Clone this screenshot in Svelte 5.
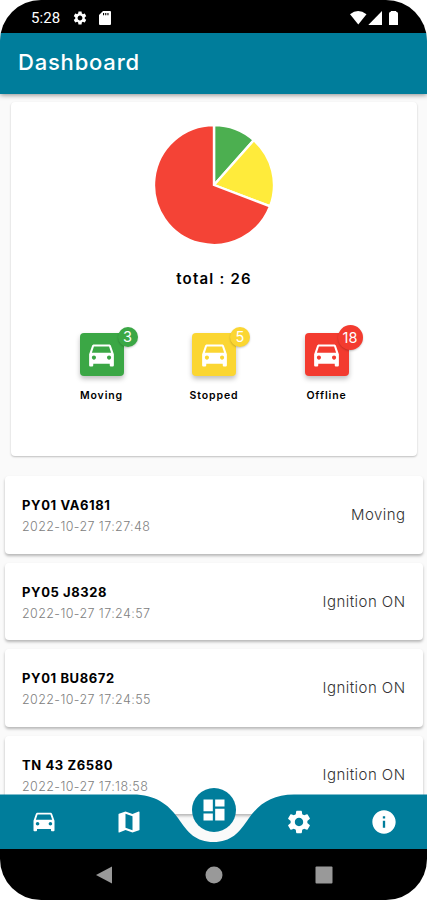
<script lang="ts">
  type Status = { label: string; count: number; color: string; pie: string };

  const statuses: Status[] = [
    { label: 'Moving', count: 3, color: '#3ba745', pie: '#4caf50' },
    { label: 'Stopped', count: 5, color: '#fbd632', pie: '#ffeb3b' },
    { label: 'Offline', count: 18, color: '#f33b2f', pie: '#f44336' }
  ];

  const vehicles = [
    { plate: 'PY01 VA6181', time: '2022-10-27 17:27:48', state: 'Moving' },
    { plate: 'PY05 J8328', time: '2022-10-27 17:24:57', state: 'Ignition ON' },
    { plate: 'PY01 BU8672', time: '2022-10-27 17:24:55', state: 'Ignition ON' },
    { plate: 'TN 43 Z6580', time: '2022-10-27 17:18:58', state: 'Ignition ON' }
  ];

  const total = statuses.reduce((sum, s) => sum + s.count, 0);

  // material icon paths, 24x24
  const car = 'M18.92 5.01C18.72 4.42 18.16 4 17.5 4h-11c-.66 0-1.21.42-1.42 1.01L3 11v8c0 .55.45 1 1 1h1c.55 0 1-.45 1-1v-1h12v1c0 .55.45 1 1 1h1c.55 0 1-.45 1-1v-8l-2.08-5.99zM6.5 15c-.83 0-1.5-.67-1.5-1.5S5.67 12 6.5 12s1.5.67 1.5 1.5S7.33 15 6.5 15zm11 0c-.83 0-1.5-.67-1.5-1.5s.67-1.5 1.5-1.5 1.5.67 1.5 1.5-.67 1.5-1.5 1.5zM5 10l1.5-4.5h11L19 10H5z';
  const map = 'M20.5 3l-.16.03L15 5.1 9 3 3.36 4.9c-.21.07-.36.25-.36.48V20.5c0 .28.22.5.5.5l.16-.03L9 18.9l6 2.1 5.64-1.9c.21-.07.36-.25.36-.48V3.5c0-.28-.22-.5-.5-.5zM15 19l-6-2.11V5l6 2.11V19z';
  const gear = 'M19.14 12.94c.04-.3.06-.61.06-.94 0-.32-.02-.64-.07-.94l2.03-1.58c.18-.14.23-.41.12-.61l-1.92-3.32c-.12-.22-.37-.29-.59-.22l-2.39.96c-.5-.38-1.03-.7-1.62-.94l-.36-2.54c-.04-.24-.24-.41-.48-.41h-3.84c-.24 0-.43.17-.47.41l-.36 2.54c-.59.24-1.13.57-1.62.94l-2.39-.96c-.22-.08-.47 0-.59.22L2.74 8.87c-.12.21-.08.47.12.61l2.03 1.58c-.05.3-.09.63-.09.94s.02.64.07.94l-2.03 1.58c-.18.14-.23.41-.12.61l1.92 3.32c.12.22.37.29.59.22l2.39-.96c.5.38 1.03.7 1.62.94l.36 2.54c.05.24.24.41.48.41h3.84c.24 0 .44-.17.47-.41l.36-2.54c.59-.24 1.13-.56 1.62-.94l2.39.96c.22.08.47 0 .59-.22l1.92-3.32c.12-.22.07-.47-.12-.61l-2.01-1.58zM12 15.6c-1.98 0-3.6-1.62-3.6-3.6s1.62-3.6 3.6-3.6 3.6 1.62 3.6 3.6-1.62 3.6-3.6 3.6z';
  const info = 'M12 2C6.48 2 2 6.48 2 12s4.48 10 10 10 10-4.48 10-10S17.52 2 12 2zm1 15h-2v-6h2v6zm0-8h-2V7h2v2z';
  const dashboard = 'M3 13h8V3H3v10zm0 8h8v-6H3v6zm10 0h8V11h-8v10zm0-18v6h8V3h-8z';

  const tabs = [car, map, dashboard, gear, info];

  function slice(index: number): string {
    const before = statuses.slice(0, index).reduce((sum, s) => sum + s.count, 0);
    const start = (before / total) * 2 * Math.PI;
    const end = ((before + statuses[index].count) / total) * 2 * Math.PI;
    const r = 60;
    const large = end - start > Math.PI ? 1 : 0;
    return `M0 0L${r * Math.sin(start)} ${-r * Math.cos(start)}A${r} ${r} 0 ${large} 1 ${r * Math.sin(end)} ${-r * Math.cos(end)}Z`;
  }
</script>

<div class="phone">
  <div class="status-bar">
    <span class="clock">5:28</span>
    <svg class="status-gear" viewBox="0 0 24 24"><path d={gear} /></svg>
    <svg class="sd" viewBox="0 0 12 14">
      <path fill-rule="evenodd" d="M4 0h7a1 1 0 0 1 1 1v12a1 1 0 0 1-1 1H1a1 1 0 0 1-1-1V4zM4 2v2.2h1.1V2zm2.2 0v2.2h1.1V2zm2.2 0v2.2h1.1V2z" />
    </svg>
    <svg class="signals" viewBox="0 0 49 16">
      <path d="M0 4.3Q8 -2.2 16.500 4.300L8.300 14.500z" />
      <path d="M18.300 15L32 1v14z" />
      <path d="M39 3.500Q39 2 41 1.600V1h5v.6q2 .4 2 1.900V15h-9z" />
    </svg>
  </div>

  <header class="app-bar">
    <h1>Dashboard</h1>
  </header>

  <main class="content">
    <section class="summary">
      <svg class="pie" viewBox="-61 -61 122 122">
        {#each statuses as status, i}
          <path d={slice(i)} fill={status.pie} />
        {/each}
      </svg>
      <p class="total">total : {total}</p>
      <div class="statuses">
        {#each statuses as status}
          <div class="status">
            <div class="tile" style="background: {status.color}">
              <svg viewBox="0 0 24 24"><path d={car} /></svg>
              <span class="badge" class:wide={status.count > 9} style="background: {status.color}">{status.count}</span>
            </div>
            <span class="label">{status.label}</span>
          </div>
        {/each}
      </div>
    </section>

    <div class="vehicles">
      {#each vehicles as vehicle}
        <article class="vehicle">
          <div>
            <h2>{vehicle.plate}</h2>
            <p class="time">{vehicle.time}</p>
          </div>
          <span class="state">{vehicle.state}</span>
        </article>
      {/each}
    </div>
  </main>

  <nav class="tab-bar">
    <svg class="tab-shape" viewBox="0 0 427 55" preserveAspectRatio="none">
      <path d="M0 0.500H133C155 0.500 168 10 178 24C188 39 196 48 213.500 48C231 48 239 39 249 24C259 10 272 0.500 294 0.500H427V55H0z" />
    </svg>
    {#each tabs as icon, i}
      <button class="tab" class:active={i === 2} aria-label="tab">
        <svg viewBox="0 0 24 24"><path d={icon} /></svg>
      </button>
    {/each}
  </nav>

  <div class="system-bar">
    <svg viewBox="0 0 18 18"><path d="M17 0.500v17L1 9z" /></svg>
    <svg viewBox="0 0 18 18"><circle cx="9" cy="9" r="8.500" /></svg>
    <svg viewBox="0 0 18 18"><rect x="0.500" y="0.500" width="17" height="17" rx="1" /></svg>
  </div>
</div>

<style>
  :global(body) {
    background: #fff;
  }

  .phone {
    width: 427px;
    height: 900px;
    display: flex;
    flex-direction: column;
    overflow: hidden;
    border-radius: 41px;
    background: #fafafa;
    font-family: Inter, 'Liberation Sans', sans-serif;
  }

  h1,
  h2,
  p {
    margin: 0;
  }

  .status-bar {
    flex: none;
    height: 33px;
    box-sizing: border-box;
    display: flex;
    align-items: center;
    padding: 3px 28px 0 31px;
    background: #000;
    color: #fff;
    fill: #fff;
  }

  .clock {
    width: 41px;
    font-family: Roboto, sans-serif;
    font-size: 15px;
    letter-spacing: 0.1px;
  }

  .status-gear {
    width: 16px;
    height: 16px;
  }

  .sd {
    width: 12px;
    height: 14px;
    margin-left: 11px;
  }

  .signals {
    width: 49px;
    height: 16px;
    margin-left: auto;
  }

  .app-bar {
    position: relative;
    z-index: 1;
    flex: none;
    height: 61px;
    display: flex;
    align-items: center;
    padding-left: 18px;
    background: #007d9b;
    box-shadow: 0 1px 5px rgba(0, 0, 0, 0.45);
  }

  h1 {
    margin-top: -3px;
    color: #fff;
    font-size: 22px;
    font-weight: 500;
    letter-spacing: 0.8px;
  }

  .content {
    flex: 1;
    min-height: 0;
    overflow: hidden;
  }

  .summary {
    height: 354px;
    box-sizing: border-box;
    margin: 8px 10px 0 11px;
    padding-top: 22px;
    display: flex;
    flex-direction: column;
    align-items: center;
    border-radius: 4px;
    background: #fff;
    box-shadow: 0 1px 2px rgba(0, 0, 0, 0.24);
  }

  .pie {
    flex: none;
    width: 122px;
    height: 122px;
  }

  .pie path {
    stroke: #fff;
    stroke-width: 2.4;
  }

  .total {
    margin-top: 23px;
    line-height: 20px;
    font-size: 15px;
    font-weight: 600;
    letter-spacing: 1.2px;
  }

  .statuses {
    display: flex;
    margin-top: 44px;
  }

  .status {
    width: 112.5px;
    display: flex;
    flex-direction: column;
    align-items: center;
  }

  .tile {
    position: relative;
    width: 44px;
    height: 43px;
    display: flex;
    align-items: center;
    justify-content: center;
    border-radius: 4px;
    box-shadow: 0 3px 5px rgba(0, 0, 0, 0.25);
  }

  .tile svg {
    width: 35px;
    height: 33px;
    margin-top: 1px;
    fill: #fff;
  }

  .badge {
    position: absolute;
    top: -6px;
    right: -14px;
    width: 20px;
    height: 20px;
    border-radius: 50%;
    box-shadow: 0 1px 2px rgba(0, 0, 0, 0.22);
    color: #fff;
    font-size: 14.5px;
    line-height: 20px;
    text-align: center;
  }

  .badge.wide {
    top: -8px;
    width: 25px;
    height: 25px;
    line-height: 25px;
  }

  .label {
    margin-top: 11px;
    line-height: 17px;
    font-size: 10.5px;
    font-weight: 600;
    letter-spacing: 0.9px;
  }

  .vehicles {
    display: flex;
    flex-direction: column;
    gap: 9px;
    margin: 20px 4px 0 5px;
  }

  .vehicle {
    height: 77.7px;
    box-sizing: border-box;
    display: flex;
    align-items: center;
    justify-content: space-between;
    padding: 0 17.5px 0 17px;
    border-radius: 4px;
    background: #fff;
    box-shadow: 0 2px 3px rgba(0, 0, 0, 0.27);
  }

  h2 {
    margin-top: 2px;
    line-height: 20px;
    font-size: 13px;
    font-weight: 700;
    letter-spacing: 0.6px;
  }

  .time {
    margin-top: 2px;
    line-height: 20px;
    color: #808080;
    font-size: 12.5px;
    font-weight: 300;
    letter-spacing: 0.4px;
  }

  .state {
    margin-top: -1px;
    color: #333;
    font-size: 15px;
    font-weight: 300;
    letter-spacing: 0.45px;
  }

  .tab-bar {
    position: relative;
    flex: none;
    height: 55px;
    margin-top: -55px;
    display: grid;
    grid-template-columns: repeat(5, 1fr);
    align-items: center;
    justify-items: center;
    padding-left: 1px;
  }

  .tab-shape {
    position: absolute;
    inset: 0;
    width: 100%;
    height: 100%;
    fill: #007d9b;
  }

  .tab {
    position: relative;
    width: 44px;
    height: 44px;
    display: flex;
    align-items: center;
    justify-content: center;
    padding: 0;
    border: none;
    border-radius: 50%;
    background: none;
  }

  .tab svg {
    width: 28px;
    height: 28px;
    fill: #fff;
  }

  .tab.active {
    margin-top: -24px;
    background: #007d9b;
  }

  .system-bar {
    position: relative;
    flex: none;
    height: 51px;
    display: flex;
    align-items: center;
    justify-content: center;
    gap: 92px;
    background: #000;
  }

  .system-bar svg {
    width: 18px;
    height: 18px;
    fill: #999;
  }
</style>
